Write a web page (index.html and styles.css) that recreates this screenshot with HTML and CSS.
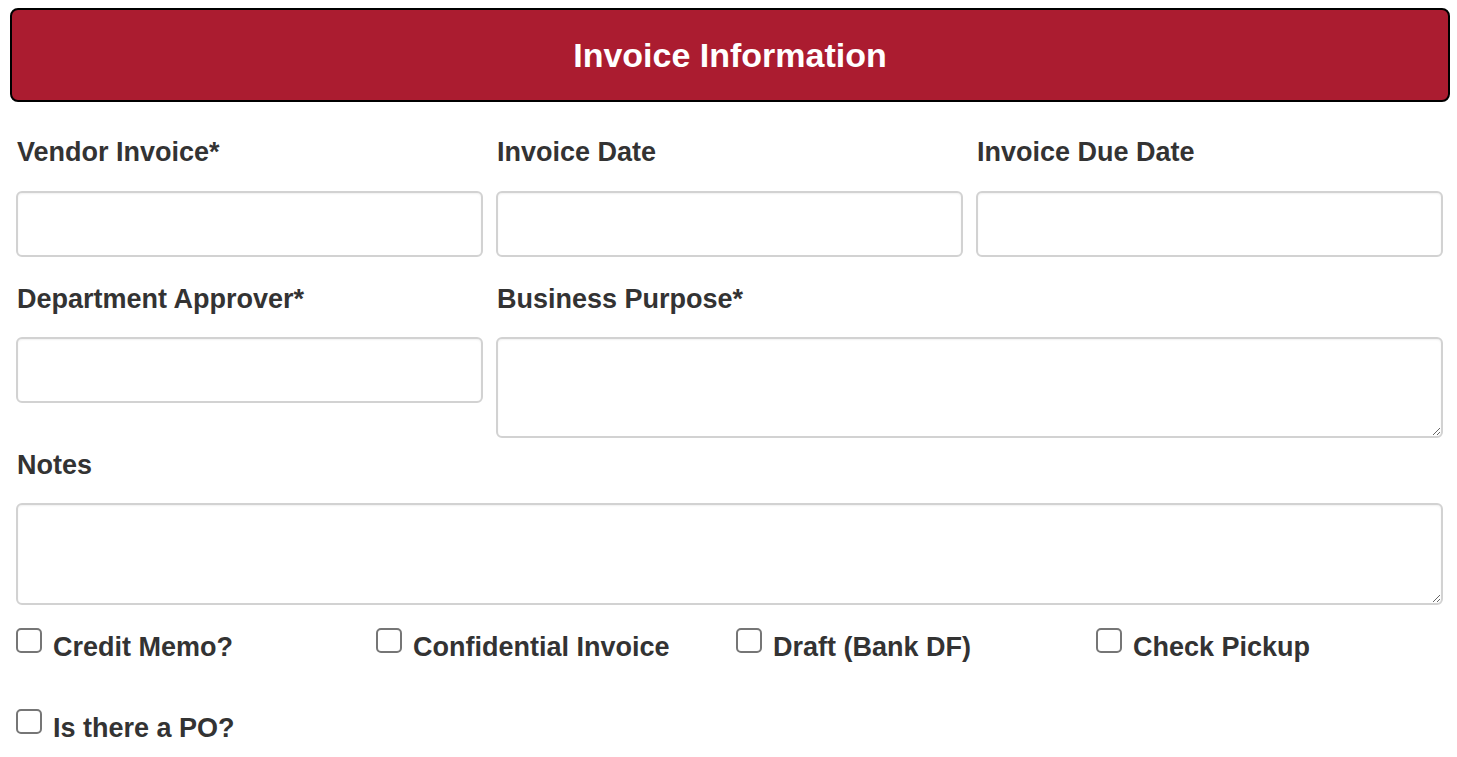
FILE: index.html
```html
<!DOCTYPE html>
<html lang="en">
<head>
    <meta charset="UTF-8">
    <title>Invoice Information</title>
    <link rel="stylesheet" href="styles.css">
</head>
<body>

<div class="invoice-form">
    <div class="section-header">
        <h2>Invoice Information</h2>
    </div>

    <div class="form-fields">
        <div class="field-row three-col">
            <div class="field">
                <label for="vendor_invoice">Vendor Invoice*</label>
                <input type="text" id="vendor_invoice">
            </div>
            <div class="field">
                <label for="invoice_date">Invoice Date</label>
                <input type="text" id="invoice_date">
            </div>
            <div class="field">
                <label for="due_date">Invoice Due Date</label>
                <input type="text" id="due_date">
            </div>
        </div>

        <div class="field-row three-col second-row">
            <div class="field">
                <label for="approver">Department Approver*</label>
                <input type="text" id="approver">
            </div>
            <div class="field wide">
                <label for="purpose">Business Purpose*</label>
                <textarea id="purpose"></textarea>
            </div>
        </div>

        <div class="field-row notes-row">
            <div class="field">
                <label for="notes">Notes</label>
                <textarea id="notes"></textarea>
            </div>
        </div>
    </div>

    <div class="checkbox-grid">
        <label class="check"><input type="checkbox"><span>Credit Memo?</span></label>
        <label class="check"><input type="checkbox"><span>Confidential Invoice</span></label>
        <label class="check"><input type="checkbox"><span>Draft (Bank DF)</span></label>
        <label class="check"><input type="checkbox"><span>Check Pickup</span></label>
        <label class="check"><input type="checkbox"><span>Is there a PO?</span></label>
    </div>
</div>

</body>
</html>
```

FILE: styles.css
```css
body {
    font-family: Arial, "Liberation Sans", sans-serif;
    margin: 0;
    padding: 8px 7px 0 10px;
    background-color: #ffffff;
    color: #333;
}

.section-header {
    display: flex;
    justify-content: center;
    align-items: center;
    width: 1440px;
    height: 94px;
    box-sizing: border-box;
    background-color: #ab1c30;
    border: 2px solid #000;
    border-radius: 8px;
}

.section-header h2 {
    margin: 0;
    color: #fff;
    font-size: 34px;
    font-weight: bold;
}

.form-fields {
    padding-left: 6px;
    width: 1427px;
}

.field-row {
    display: grid;
    column-gap: 13px;
    align-items: start;
}

.three-col {
    grid-template-columns: repeat(3, 1fr);
    margin-top: 35px;
}

.second-row {
    margin-top: 27px;
}

.notes-row {
    margin-top: 12px;
}

.field {
    display: flex;
    flex-direction: column;
}

.field.wide {
    grid-column: span 2;
}

.field label {
    font-size: 27px;
    font-weight: bold;
    line-height: 30px;
    margin-bottom: 24px;
    padding-left: 1px;
}

.second-row .field label,
.notes-row .field label {
    margin-bottom: 23px;
}

.field input,
.field textarea {
    box-sizing: border-box;
    width: 100%;
    margin: 0;
    border: 2px solid #d2d2d2;
    border-radius: 6px;
    box-shadow: inset 0 1px 2px rgba(0, 0, 0, 0.06);
    font-family: inherit;
    font-size: 18px;
    background-color: #fff;
}

.field input {
    height: 66px;
}

.field textarea {
    display: block;
    height: 101px;
    resize: both;
}

.notes-row textarea {
    height: 102px;
}

.checkbox-grid {
    display: grid;
    grid-template-columns: repeat(4, 360px);
    row-gap: 47px;
    padding-left: 6px;
    margin-top: 23px;
}

.check {
    display: flex;
    align-items: flex-start;
    font-size: 27px;
    font-weight: bold;
    line-height: 30px;
    cursor: pointer;
}

.check input {
    appearance: none;
    -webkit-appearance: none;
    width: 26px;
    height: 25px;
    margin: 0 11px 0 0;
    border: 2px solid #767676;
    border-radius: 5px;
    background: #fff;
    flex-shrink: 0;
}

.check span {
    margin-top: 4px;
}
```
